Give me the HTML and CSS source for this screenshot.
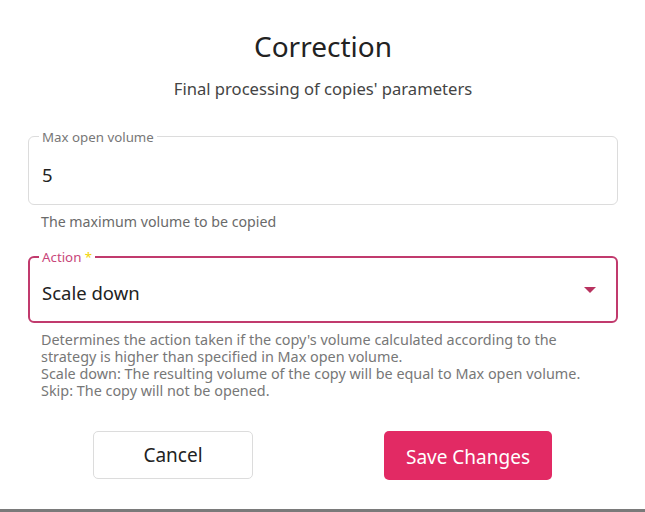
FILE: index.html
```html
<!DOCTYPE html>
<html lang="en">
<head>
<meta charset="utf-8">
<title>Correction</title>
<link rel="stylesheet" href="styles.css">
</head>
<body>
<div class="dialog">
  <h1 class="title">Correction</h1>
  <p class="subtitle">Final processing of copies' parameters</p>

  <div class="field">
    <span class="label">Max open volume</span>
    <span class="value">5</span>
  </div>
  <p class="helper helper-first">The maximum volume to be copied</p>

  <div class="field field-focus">
    <span class="label label-focus">Action <span class="star">*</span></span>
    <span class="value">Scale down</span>
    <span class="arrow"></span>
  </div>
  <p class="helper helper-second">Determines the action taken if the copy's volume calculated according to the strategy is higher than specified in Max open volume.<br>Scale down: The resulting volume of the copy will be equal to Max open volume.<br>Skip: The copy will not be opened.</p>

  <div class="actions">
    <button class="btn btn-cancel">Cancel</button>
    <button class="btn btn-save">Save Changes</button>
  </div>
</div>
</body>
</html>
```
FILE: styles.css
```css
* { box-sizing: border-box; }
html, body { margin: 0; padding: 0; background: #fff; }
body { font-family: "Noto Sans", Lato, sans-serif; }
.dialog {
  height: 512px;
  padding: 30px 27px 0 28px;
  border-bottom: 3px solid #7a7a7a;
  display: flex;
  flex-direction: column;
}
.title {
  margin: 0;
  font-size: 28px;
  line-height: 32px;
  font-weight: 400;
  color: #222;
  text-align: center;
}
.subtitle {
  margin: 17px 0 0;
  font-size: 16.6px;
  line-height: 20px;
  color: #444;
  text-align: center;
}
.field {
  position: relative;
  margin-top: 37px;
  height: 69px;
  border: 1px solid #dcdcdc;
  border-radius: 6px;
  display: flex;
  align-items: center;
  padding: 8px 13px 0;
}
.field-focus {
  margin-top: 26px;
  height: 67px;
  border: 2px solid #c13a6d;
  padding: 6px 12px 0;
}
.label {
  position: absolute;
  top: -8px;
  left: 10px;
  padding: 0 3px;
  background: #fff;
  font-size: 13.3px;
  line-height: 16px;
  color: #777;
}
.label-focus { left: 9px; top: -9px; color: #c8467a; }
.star { color: #f2d500; }
.value {
  font-size: 18.5px;
  line-height: 24px;
  color: #222;
}
.arrow {
  position: absolute;
  right: 20px;
  top: 29px;
  width: 0;
  height: 0;
  border-left: 6px solid transparent;
  border-right: 6px solid transparent;
  border-top: 6px solid #b8325f;
}
.helper {
  margin: 0;
  padding-left: 13px;
  font-size: 14.2px;
  line-height: 17px;
  color: #6a6a6a;
}
.helper-first { margin-top: 8px; }
.helper-second { margin-top: 8px; font-size: 14.4px; color: #777; padding-right: 20px; }
.actions {
  margin-top: 32px;
  display: flex;
  justify-content: center;
  gap: 131px;
  padding-right: 1px;
}
.btn {
  font-family: inherit;
  border-radius: 5px;
  font-size: 19px;
  cursor: pointer;
}
.btn-cancel {
  width: 160px;
  height: 48px;
  background: #fff;
  border: 1px solid #dcdcdc;
  color: #222;
}
.btn-save {
  width: 168px;
  height: 49px;
  padding-top: 3px;
  background: #e22a64;
  border: none;
  color: #fff;
}
```
